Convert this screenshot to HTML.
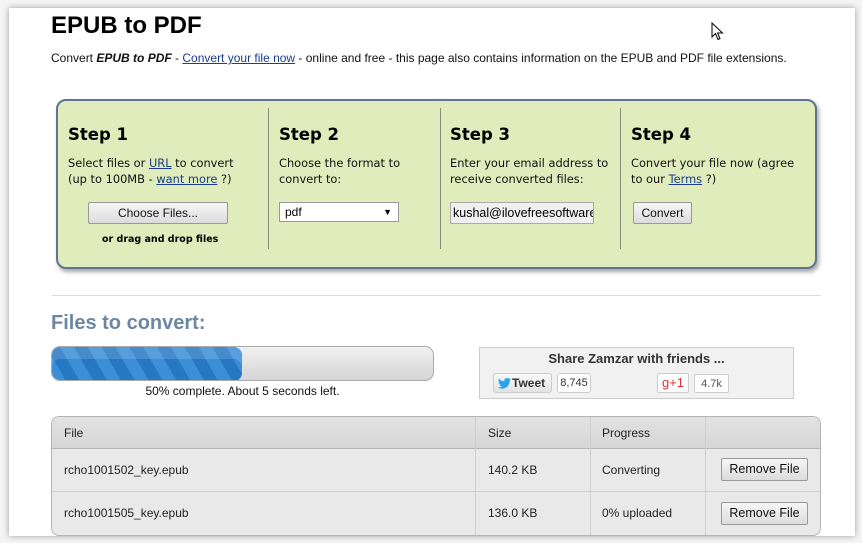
<!DOCTYPE html>
<html><head><style>
*{margin:0;padding:0;box-sizing:border-box}
body{width:862px;height:543px;background:#f4f4f4;position:relative;overflow:hidden;font-family:"Liberation Sans",Arial,sans-serif;color:#000}
.panel{position:absolute;left:9px;top:8px;width:846px;height:528px;background:#fff;box-shadow:0 0 6px rgba(0,0,0,.35)}
.a{position:absolute}
a{color:#1a3d8c;text-decoration:underline}
.v{font-family:"DejaVu Sans",Verdana,sans-serif}
.green{left:56px;top:99px;width:761px;height:170px;background:#e0ecbb;border:2px solid #5d7592;border-radius:10px;box-shadow:2px 3px 4px rgba(0,0,0,.35)}
.div{width:1px;background:#8a8a7a;top:108px;height:141px}
.sh{font:bold 16.5px "DejaVu Sans",Verdana,sans-serif;top:125px}
.st{font:11.4px/16px "DejaVu Sans",Verdana,sans-serif;top:155px;color:#111}
.btn{background:linear-gradient(#f6f6f6,#dcdcdc);border:1px solid #999;border-radius:2px;font:12px "Liberation Sans",Arial,sans-serif;text-align:center;color:#111}
.tbl{left:51px;top:416px;width:770px;height:120px;border:1px solid #b5b5b5;border-radius:8px;background:#e9e9e9;overflow:hidden;font-size:12px;color:#222}
.tbl .row{position:absolute;left:0;width:770px;border-top:1px solid #cfcfcf}
.tbl .c{position:absolute;top:0;bottom:0;width:1px;background:#cfcfcf}
</style></head><body>
<div class="panel"></div>
<div class="a" style="left:51px;top:12px;font:bold 24px 'Liberation Sans',Arial,sans-serif">EPUB to PDF</div>
<div class="a" style="left:51px;top:51px;font-size:12px;color:#111">Convert <b><i>EPUB to PDF</i></b> - <a>Convert your file now</a> - online and free - this page also contains information on the EPUB and PDF file extensions.</div>
<svg class="a" style="left:711px;top:22px" width="14" height="20" viewBox="0 0 14 20"><path d="M1 1 L1 15 L4.5 11.5 L7 17.5 L9 16.6 L6.6 11 L11.5 11 Z" fill="#fff" stroke="#000" stroke-width="1"/></svg>

<div class="a green"></div>
<div class="a div" style="left:268px"></div>
<div class="a div" style="left:440px"></div>
<div class="a div" style="left:620px"></div>
<div class="a sh" style="left:68px">Step 1</div>
<div class="a sh" style="left:279px">Step 2</div>
<div class="a sh" style="left:450px">Step 3</div>
<div class="a sh" style="left:631px">Step 4</div>
<div class="a st" style="left:68px">Select files or <a>URL</a> to convert<br>(up to 100MB - <a>want more</a> ?)</div>
<div class="a st" style="left:279px">Choose the format to<br>convert to:</div>
<div class="a st" style="left:450px">Enter your email address to<br>receive converted files:</div>
<div class="a st" style="left:631px">Convert your file now (agree<br>to our <a>Terms</a> ?)</div>
<div class="a btn" style="left:88px;top:202px;width:140px;height:22px;line-height:20px">Choose Files...</div>
<div class="a v" style="left:102px;top:234px;font-size:9.5px;font-weight:bold">or drag and drop files</div>
<div class="a" style="left:279px;top:202px;width:120px;height:20px;background:#fff;border:1px solid #999;font-size:12px;line-height:18px;padding-left:5px">pdf<span style="position:absolute;right:6px;font-size:9px">▼</span></div>
<div class="a" style="left:450px;top:202px;width:144px;height:22px;background:#f0f0f0;border:1px solid #aaa;font-size:12.5px;line-height:20px;padding-left:2px;overflow:hidden;white-space:nowrap">kushal@ilovefreesoftware</div>
<div class="a btn" style="left:633px;top:202px;width:59px;height:22px;line-height:20px">Convert</div>

<div class="a" style="left:52px;top:295px;width:769px;height:1px;background:#ddd"></div>
<div class="a" style="left:51px;top:312px;font:bold 20px 'Liberation Sans',Arial,sans-serif;color:#6d87a2">Files to convert:</div>
<div class="a" style="left:51px;top:346px;width:383px;height:35px;border:1px solid #aaa;border-radius:9px;background:linear-gradient(#f0f0f0,#d6d6d6);overflow:hidden">
<div style="width:190px;height:34px;border-radius:8px;background:repeating-linear-gradient(60deg,#3a8fd6 0 12px,#2678c3 12px 24px);box-shadow:inset 0 12px 0 rgba(255,255,255,.15)"></div></div>
<div class="a" style="left:51px;top:384px;width:383px;text-align:center;font-size:12px;color:#111">50% complete. About 5 seconds left.</div>

<div class="a" style="left:479px;top:347px;width:315px;height:52px;background:#f1f1f1;border:1px solid #ccc"></div>
<div class="a" style="left:479px;top:351px;width:315px;text-align:center;font:bold 13px 'Liberation Sans',Arial,sans-serif;color:#333">Share Zamzar with friends ...</div>
<div class="a" style="left:493px;top:373px;width:59px;height:20px;border:1px solid #ccc;border-radius:3px;background:linear-gradient(#fafafa,#e2e2e2);font:bold 12px 'Liberation Sans',Arial,sans-serif;color:#333;line-height:18px;padding-left:18px">Tweet<svg style="position:absolute;left:4px;top:4px" width="13" height="11" viewBox="0 0 13 11"><path d="M13 1.3c-.5.2-1 .4-1.5.4.6-.3 1-.9 1.2-1.5-.5.3-1.1.5-1.7.7C10.5.3 9.8 0 9 0 7.5 0 6.3 1.2 6.3 2.7c0 .2 0 .4.1.6C4.1 3.2 2.2 2.1.9.5.6.9.5 1.4.5 1.9c0 .9.5 1.8 1.2 2.2-.4 0-.9-.1-1.2-.3 0 1.3.9 2.4 2.1 2.6-.4.1-.8.1-1.2 0 .3 1.1 1.3 1.9 2.5 1.9-.9.7-2.1 1.2-3.3 1.2H0c1.2.8 2.6 1.2 4.1 1.2 4.9 0 7.6-4.1 7.6-7.6v-.3c.5-.4 1-.9 1.3-1.4z" fill="#2aa3ef"/></svg></div>
<div class="a" style="left:557px;top:373px;width:34px;height:20px;border:1px solid #ccc;border-radius:3px;background:#fff;font-size:11px;line-height:18px;text-align:center;color:#333">8,745</div>
<div class="a" style="left:657px;top:373px;width:32px;height:20px;border:1px solid #ccc;border-radius:2px;background:#fff;font-size:13px;line-height:18px;text-align:center;color:#d33">g+1</div>
<div class="a" style="left:694px;top:374px;width:35px;height:19px;border:1px solid #ccc;border-radius:2px;background:#fff;font-size:11px;line-height:19px;text-align:center;color:#555">4.7k</div>

<div class="a tbl">
<div style="position:absolute;left:0;top:0;width:770px;height:31px;background:linear-gradient(#e2e2e2,#d6d6d6)"></div>
<div class="row" style="top:31px;border-top-color:#b5b5b5"></div>
<div class="row" style="top:74px"></div>
<div class="c" style="left:423px"></div><div class="c" style="left:538px"></div><div class="c" style="left:653px"></div>
<div class="a" style="left:12px;top:9px">File</div>
<div class="a" style="left:436px;top:9px">Size</div>
<div class="a" style="left:550px;top:9px">Progress</div>
<div class="a" style="left:12px;top:46px">rcho1001502_key.epub</div>
<div class="a" style="left:436px;top:46px">140.2 KB</div>
<div class="a" style="left:550px;top:46px">Converting</div>
<div class="a" style="left:12px;top:89px">rcho1001505_key.epub</div>
<div class="a" style="left:436px;top:89px">136.0 KB</div>
<div class="a" style="left:550px;top:89px">0% uploaded</div>
<div class="a btn" style="left:669px;top:41px;width:87px;height:23px;line-height:21px;font-size:12.5px">Remove File</div>
<div class="a btn" style="left:669px;top:85px;width:87px;height:23px;line-height:21px;font-size:12.5px">Remove File</div>
</div>
</body></html>
